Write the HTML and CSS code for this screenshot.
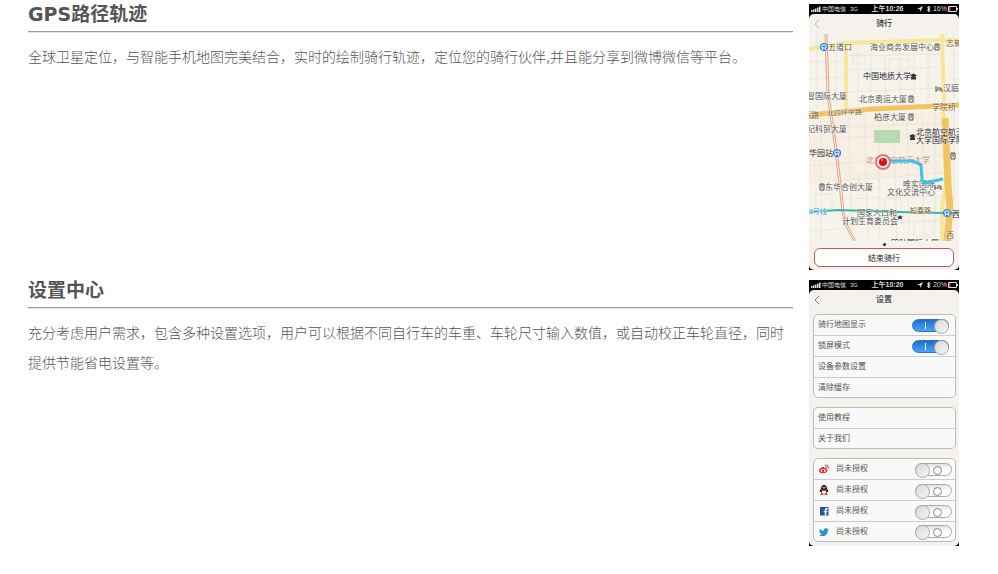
FILE: index.html
```
<!DOCTYPE html>
<html lang="zh-CN">
<head>
  <meta charset="utf-8">
  <meta name="viewport" content="width=device-width, initial-scale=1.0">
  <title>功能介绍</title>
  <link rel="stylesheet" href="styles.css">
</head>
<body>
  <!-- GPS -->
  <div class="feature">
    <div class="feature-text">
      <h2>GPS路径轨迹</h2>
      <hr>
      <p>全球卫星定位，与智能手机地图完美结合，实时的绘制骑行轨迹，定位您的骑行伙伴,并且能分享到微博微信等平台。</p>
    </div>
    <div class="phone">
      <div class="status">
        <svg class="signal" viewBox="0 0 10 6"><path d="M0 4h1.500v2H0zM2 3.300h1.500V6H2zM4 2.500h1.500V6H4zM6 1.500h1.500V6H6zM8 .5h1.500V6H8z"/></svg>
        <span class="carrier">中国电信</span>
        <span class="net">3G</span>
        <span class="time">上午10:26</span>
        <svg class="status-icons" viewBox="0 0 14 8"><path d="M0 4L6 1 3.500 7 3 4.200z"/><path class="line" d="M10 2.300l3.200 3L11.600 7V1l1.600 1.700L10 5.700"/></svg>
        <span class="percent">16%</span>
        <svg class="battery" viewBox="0 0 10 6"><path class="line" d="M.5 .5h8v5h-8z"/><path d="M9 2h1v2H9z"/><path class="low" d="M1 1h1.500v4H1z"/></svg>
      </div>
      <div class="screen">
        <div class="nav">
          <button class="back faded" aria-label="返回"><svg viewBox="0 0 6 10"><path d="M5 1L1 5l4 4"/></svg></button>
          <h3>骑行</h3>
        </div>
        <svg class="map" viewBox="0 0 150 207">
          <rect width="150" height="207" fill="#f6f3ea"/>
          <path d="M0 84L134 78V140L75 145 0 150z" fill="#f8efe4"/>
          <!-- small streets -->
          <g class="streets">
            <path d="M0 28h36M0 45l36-2M38 22l95-2M38 36l94-3M38 58l95-4M0 95l134-6M22 104l113-5M0 132l134-11M26 147l110-8M30 165l105-3M0 197l40-3M40 190l96-4M141 20h9M141 45h9M141 98h9M143 134h7"/>
            <path d="M8 0v75M27 12v60M49 9v64M62 9v68M76 8v70M91 8v68M105 8v65M119 8v62M12 82v125M39 77l4 125M55 77l4 130M70 77v130M84 76l4 130M98 75l2 132M113 75l2 132M126 75v132M145 0v65M145 80v90"/>
            <path d="M44 20h12v10H44zM80 25h20v12H80zM50 140h20v14H50zM76 165h16v14H76zM7 160h16v14H7zM105 188h18v14h-18z"/>
          </g>
          <!-- main roads -->
          <path class="road" d="M0 15L37 9 133 6H150"/>
          <path class="road" d="M37 9V76"/>
          <path class="road" d="M133 0L135 74" stroke-width="6"/>
          <path class="road" d="M134 75L138 145 133 173V207"/>
          <path class="ring" d="M0 81L63 75 150 71"/>
          <path class="ring wide" d="M136 84L139 150 141 175 138 207"/>
          <rect x="65" y="96" width="26" height="13" fill="#b9d9b3"/>
          <!-- rail and metro -->
          <path class="rail" d="M16 0L18 60 26 116 30 150 33 178Q36 194 45 207"/>
          <path class="rail" d="M18 0L20 60 28 116 32 150 35 178Q38 194 47 207"/>
          <path class="metro" d="M0 178L29 176 89 178 134 179H150"/>
          <!-- place names -->
          <text x="19" y="16">五道口</text>
          <text x="61" y="16">海业商务发展中心</text>
          <text class="brown" x="137" y="12">志新</text>
          <text class="dark" x="54" y="45">中国地质大学</text>
          <text x="134" y="57">汉庭</text>
          <text x="-2" y="65">智国际大厦</text>
          <text x="50" y="68">北京奥运大厦</text>
          <text class="brown" x="123" y="76">学院桥</text>
          <text class="brown" x="-6" y="84">高路</text>
          <text class="brown road-name" x="18" y="82" transform="rotate(-3 18 82)">北四环中路</text>
          <text x="65" y="86">柏彦大厦</text>
          <text x="-2" y="98">纪科贸大厦</text>
          <text class="dark" x="107" y="101">北京航空航天</text>
          <text class="dark" x="107" y="109">大学国际学院</text>
          <text class="dark" x="0" y="122">华园站</text>
          <text class="tan" x="57" y="129">北京航空航天大学</text>
          <text x="94" y="153">唯实国际</text>
          <text x="78" y="161">文化交流中心</text>
          <text x="16" y="156">东华合创大厦</text>
          <text class="blue road-name" x="-4" y="180">13号线</text>
          <text x="48" y="182">国家人口和</text>
          <text class="brown road-name" x="101" y="179">知春路</text>
          <text x="33" y="190">计划生育委员会</text>
          <text class="dark" x="143" y="183">西</text>
          <text class="brown" x="137" y="204">西</text>
          <text class="brown" x="137" y="212">土</text>
          <text class="dark" x="82" y="212">锦秋国际大厦</text>
          <!-- ridden track -->
          <path class="track" d="M80 127L104 127 112 131 113 145Q114 150 120 148L134 145"/>
          <g class="station">
            <circle cx="15" cy="13" r="4"/><circle cx="28" cy="119" r="4"/><circle cx="138" cy="179" r="4"/>
            <path d="M13 11h4v3h-4zM13 16l1-2M17 16l-1-2M26 117h4v3h-4zM26 122l1-2M30 122l-1-2M136 177h4v3h-4zM136 182l1-2M140 182l-1-2"/>
          </g>
          <g class="gates"><path d="M126 10h4v6h-4zM128 10v4M100 62h4v6h-4zM102 62v4M100 80h4v6h-4zM102 80v4M11 150h4v6h-4zM13 150v4M142 119h4v6h-4zM144 119v4M127 52v6M127 56h6v2M128 54h4v2M126 151v5M126 154h6v2M128 152h4v2"/></g>
          <path d="M101 41.500l3.500-2 3.500 2-3.500 2zM102 43h5v2.500h-5zM100 102l3.500-2 3.500 2-3.500 2zM101 103.500h5v2.500h-5zM91 181l1 1.500h2l-1.500 1.200.5 2-2-1.200-2 1.200.5-2L88 182.500h2z" fill="#333"/>
          <circle cx="74" cy="128" r="7" fill="#f7e6e0" stroke="#c9837c" stroke-width="2"/>
          <circle cx="74" cy="128" r="4" fill="#cf1515"/>
          <circle cx="73" cy="126" r="1" fill="#f39a94"/>
        </svg>
        <div class="ride-footer">
          <i class="dot"></i>
          <button class="end-ride">结束骑行</button>
        </div>
      </div>
    </div>
  </div>

  <!-- SETTINGS -->
  <div class="feature">
    <div class="feature-text">
      <h2>设置中心</h2>
      <hr>
      <p>充分考虑用户需求，包含多种设置选项，用户可以根据不同自行车的车重、车轮尺寸输入数值，或自动校正车轮直径，同时提供节能省电设置等。</p>
    </div>
    <div class="phone">
      <div class="status">
        <svg class="signal" viewBox="0 0 10 6"><path d="M0 4h1.500v2H0zM2 3.300h1.500V6H2zM4 2.500h1.500V6H4zM6 1.500h1.500V6H6zM8 .5h1.500V6H8z"/></svg>
        <span class="carrier">中国电信</span>
        <span class="net">3G</span>
        <span class="time">上午10:20</span>
        <svg class="status-icons" viewBox="0 0 14 8"><path d="M0 4L6 1 3.500 7 3 4.200z"/><path class="line" d="M10 2.300l3.200 3L11.600 7V1l1.600 1.700L10 5.700"/></svg>
        <span class="percent">20%</span>
        <svg class="battery" viewBox="0 0 10 6"><path class="line" d="M.5 .5h8v5h-8z"/><path d="M9 2h1v2H9z"/><path class="low" d="M1 1h1.500v4H1z"/></svg>
      </div>
      <div class="screen">
        <div class="nav">
          <button class="back" aria-label="返回"><svg viewBox="0 0 6 10"><path d="M5 1L1 5l4 4"/></svg></button>
          <h3>设置</h3>
        </div>
        <div class="settings">
          <ul class="group">
            <li><label for="showMap">骑行地图显示</label><input type="checkbox" class="switch" id="showMap" checked></li>
            <li><label for="lockMode">锁屏模式</label><input type="checkbox" class="switch" id="lockMode" checked></li>
            <li><a href="#">设备参数设置</a></li>
            <li><a href="#">清除缓存</a></li>
          </ul>
          <ul class="group">
            <li><a href="#">使用教程</a></li>
            <li><a href="#">关于我们</a></li>
          </ul>
          <ul class="group accounts">
            <li>
              <svg viewBox="0 0 10 10"><path fill="#d52b2b" d="M4 3C2 3.300 0 5 0 6.700 0 8.300 2 9.300 4.200 9.300S8.500 8 8.500 6.500c0-.8-.7-1.100-1.300-1.300.4-1.200-.5-1.700-2-1C5.300 3.300 4.900 2.900 4 3z"/><ellipse cx="4.200" cy="6.700" rx="2.600" ry="1.600" fill="#fff"/><circle cx="4" cy="6.800" r="1.200" fill="#c22"/><path fill="none" stroke="#d52b2b" d="M6 1.200C8.500.6 10 2.500 9.200 4.600M6.300 2.900c1-.2 1.600.4 1.300 1.400"/></svg>
              <label for="weibo">尚未授权</label><input type="checkbox" class="switch" id="weibo">
            </li>
            <li>
              <svg viewBox="0 0 10 10"><path fill="#1c1c1c" d="M5 0C3 0 2 1.500 2 3.500 1 4.800.3 6.300.8 7.300l1-.8L2.800 9h4.400l1-2.500 1 .8c.5-1-.2-2.500-1.200-3.800C8 1.500 7 0 5 0z"/><ellipse cx="5" cy="6.900" rx="2.200" ry="2" fill="#fff"/><path fill="#fff" d="M3.500 1.700h1v1.300h-1zM5.500 1.700h1v1.300h-1z"/><path fill="#d9392b" d="M2.100 4.200Q5 5.500 7.900 4.200V5.500Q5 6.700 2.100 5.500z"/><path fill="#efa421" d="M3.500 3.300h3L5 4.200z"/><path fill="#d9392b" d="M1.200 9Q3 8 4.800 9.200L4 10H1.700zM8.800 9Q7 8 5.200 9.200L6 10h2.300z"/></svg>
              <label for="qq">尚未授权</label><input type="checkbox" class="switch" id="qq">
            </li>
            <li>
              <svg viewBox="0 0 10 10"><path fill="#24539b" d="M1 1h8.500v8.500H1z"/><path fill="#fff" d="M5.800 9.500V6.300H4.700V5h1.100V4c0-1.300.7-1.900 1.900-1.900h.9v1.300H8c-.5 0-.7.2-.7.7V5h1.300l-.2 1.300H7.300v3.200z"/></svg>
              <label for="facebook">尚未授权</label><input type="checkbox" class="switch" id="facebook">
            </li>
            <li>
              <svg viewBox="0 0 10 10"><path fill="#2b8fce" d="M.8 1.700C2 3 3.300 3.700 4.900 3.800 4.600 2.300 5.500 1.200 6.800 1.200c.6 0 1.100.2 1.500.6l1.200-.5-.8 1.200 1.100-.2-1 1.100C9 6.500 6.800 9.100 3.600 9.100 2.300 9.100 1 8.800.2 8.200c1 .1 2-.2 2.800-.8C2.100 7.300 1.400 6.800 1.200 6h.8C1 5.700.4 4.900.4 3.900l.8.2C.4 3.500.2 2.500.8 1.700z"/></svg>
              <label for="twitter">尚未授权</label><input type="checkbox" class="switch" id="twitter">
            </li>
          </ul>
        </div>
      </div>
    </div>
  </div>
</body>
</html>
```
FILE: styles.css
```
* {
  box-sizing: border-box;
}

body {
  margin: 0;
  padding: 4px 39px 28px 28px;
  background: #fff;
  color: #555;
  font-family: "Liberation Sans", "Noto Sans CJK SC", sans-serif;
  font-size: 14px;
}

button {
  padding: 0;
  border: none;
  background: none;
  font-family: inherit;
  cursor: pointer;
}

/* FEATURES */
.feature {
  display: flex;
  gap: 16px;
  margin-bottom: 10px;
}

.feature-text {
  flex: 1;
}

h2 {
  margin: 0;
  color: #555;
  font-family: "DejaVu Sans", "Noto Sans CJK SC", sans-serif;
  font-size: 19px;
  line-height: 20px;
}

hr {
  margin: 7px 0 9px;
  border: none;
  border-top: 1px solid #999;
  border-bottom: 1px solid #e4e4e4;
}

p {
  margin: 0;
  font-weight: 300;
  line-height: 30px;
}

/* PHONE */
.phone {
  flex: none;
  width: 150px;
  background: #000;
  color: #333;
  font-size: 8px;
}

.status {
  display: flex;
  align-items: center;
  height: 10px;
  padding: 0 1px 0 2px;
  color: #ddd;
  font-size: 6px;
  line-height: 10px;
  white-space: nowrap;
}

.status svg {
  fill: #ddd;
}

.status .line {
  fill: none;
  stroke: #ddd;
  stroke-width: 1;
}

.status .low {
  fill: #e33;
}

.signal,
.battery {
  width: 10px;
  height: 6px;
}

.carrier {
  margin-left: 1px;
}

.net {
  margin-left: 4px;
}

.time {
  margin: 0 auto;
  font-size: 7px;
  font-weight: bold;
}

.status-icons {
  width: 14px;
  height: 8px;
}

.percent {
  margin: 0 1px 0 2px;
  font-size: 7px;
}

.screen {
  overflow: hidden;
  border-radius: 5px;
  background: #f5f1ed;
}

.nav {
  display: grid;
  grid-template-columns: 16px 1fr 16px;
  align-items: center;
  height: 20px;
}

.nav h3 {
  margin: 0;
  font-size: 8px;
  font-weight: 500;
  line-height: 20px;
  text-align: center;
}

.back {
  display: flex;
  justify-content: center;
}

.back svg {
  width: 6px;
  height: 10px;
  fill: none;
  stroke: #777;
}

.back.faded svg {
  stroke: #bbb;
}

/* MAP */
.map {
  display: block;
  width: 100%;
  font-size: 8px;
}

.map text {
  fill: #555;
  stroke: #fff;
  stroke-width: 1px;
  stroke-opacity: 0.6;
  paint-order: stroke;
}

.map .dark {
  fill: #222;
}

.map .brown {
  fill: #80592c;
}

.map .tan {
  fill: #c08a6c;
}

.map .blue {
  fill: #2aa5d8;
}

.map .road-name {
  font-size: 7px;
}

.streets {
  fill: none;
  stroke: #ebe6da;
  stroke-width: 1;
}

.road {
  fill: none;
  stroke: #f4e79c;
  stroke-width: 4;
}

.ring {
  fill: none;
  stroke: #f2c562;
  stroke-width: 5;
}

.ring.wide {
  stroke-width: 7;
}

.rail {
  fill: none;
  stroke: #e9a08a;
  stroke-width: 1;
}

.metro {
  fill: none;
  stroke: #38b5a8;
  stroke-width: 2;
}

.track {
  fill: none;
  stroke: #3fc0ea;
  stroke-width: 3;
}

.station circle {
  fill: #2e7fd6;
}

.station path,
.gates path {
  fill: none;
  stroke: #fff;
  stroke-width: 1;
}

.gates path {
  stroke: #555;
}

.ride-footer {
  display: flex;
  flex-direction: column;
  align-items: center;
  gap: 2px;
  height: 29px;
  padding: 2px 5px 3px;
}

.dot {
  width: 3px;
  height: 3px;
  border-radius: 50%;
  background: #222;
}

.end-ride {
  width: 100%;
  height: 19px;
  border: 1px solid #cf5560;
  border-radius: 6px;
  background: #fff;
  color: #222;
  font-size: 8px;
}

/* SETTINGS */
.settings {
  display: flex;
  flex-direction: column;
  gap: 9px;
  padding: 4px 3px 4px 4px;
}

.group {
  margin: 0;
  padding: 0;
  border: 1px solid #bbb;
  border-radius: 5px;
  background: #f9f9f9;
  list-style: none;
}

.group li {
  display: flex;
  align-items: center;
  height: 21px;
  padding: 0 6px 0 4px;
}

.group li:first-child,
.group li:last-child {
  height: 20px;
}

.group li + li {
  border-top: 1px solid #ccc;
}

.group label,
.group a {
  flex: 1;
  color: #555;
  line-height: 12px;
  text-decoration: none;
}

.accounts li {
  gap: 7px;
  padding: 0 3px 0 5px;
}

.accounts svg {
  width: 10px;
  height: 10px;
}

.switch {
  appearance: none;
  position: relative;
  width: 37px;
  height: 13px;
  margin: 0;
  border: 1px solid #aaa;
  border-radius: 7px;
  background: linear-gradient(#e2e2e2, #fff 50%);
}

.switch::before {
  content: "";
  position: absolute;
  top: -1px;
  left: -1px;
  width: 13px;
  height: 13px;
  border: 1px solid #aaa;
  border-radius: 50%;
  background: linear-gradient(135deg, #d8d8d8, #f6f6f6);
}

.switch::after {
  content: "";
  position: absolute;
  top: 2px;
  right: 9px;
  width: 7px;
  height: 7px;
  border: 1px solid #888;
  border-radius: 50%;
}

.switch:checked {
  border-color: #2873c4;
  background: linear-gradient(#1f6fd0, #4ba3f5);
}

.switch:checked::before {
  right: -1px;
  left: auto;
}

.switch:checked::after {
  right: 22px;
  width: 1px;
  border: none;
  border-radius: 0;
  background: #fff;
}
```
